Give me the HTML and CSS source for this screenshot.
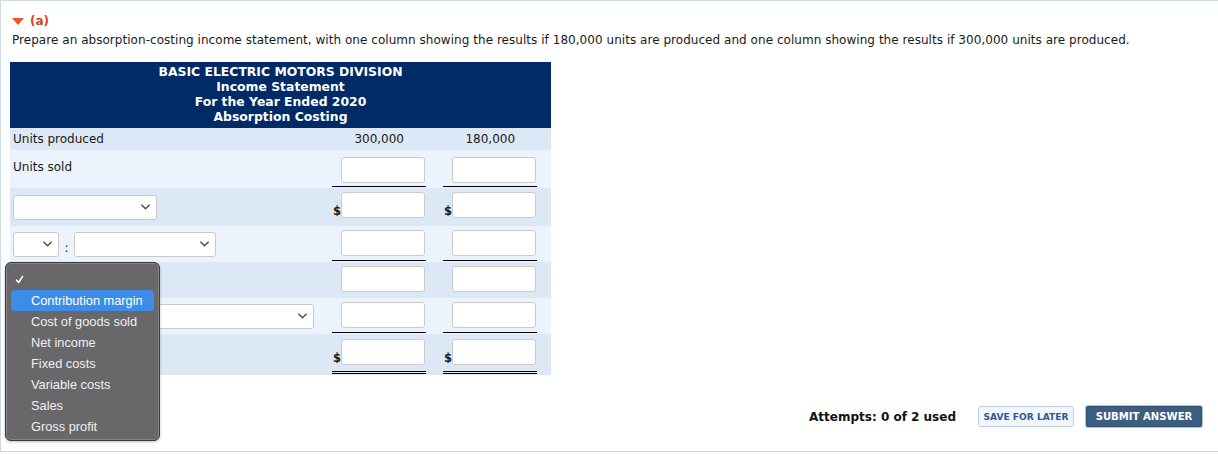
FILE: index.html
```html
<!DOCTYPE html>
<html>
<head>
<meta charset="utf-8">
<link rel="stylesheet" href="styles.css">
</head>
<body>
<div class="frame">
  <div class="part-head"><span class="tri"></span><span class="part-label">(a)</span></div>
  <p class="prompt">Prepare an absorption-costing income statement, with one column showing the results if 180,000 units are produced and one column showing the results if 300,000 units are produced.</p>

  <table class="stmt">
    <colgroup><col class="c-label"><col class="c-val"><col class="c-val2"></colgroup>
    <thead>
      <tr><th colspan="3">BASIC ELECTRIC MOTORS DIVISION<br>Income Statement<br>For the Year Ended 2020<br>Absorption Costing</th></tr>
    </thead>
    <tbody>
      <tr class="r-produced dark">
        <td class="label">Units produced</td>
        <td class="num">300,000</td>
        <td class="num">180,000</td>
      </tr>
      <tr class="r-sold light">
        <td class="label">Units sold</td>
        <td class="val"><div class="box under"><span class="cur"></span><span class="inp"></span></div></td>
        <td class="val"><div class="box under"><span class="cur"></span><span class="inp"></span></div></td>
      </tr>
      <tr class="r38 dark">
        <td class="label"><div class="sel w144"><svg class="chev" viewBox="0 0 10 6"><path d="M1 1l4 4 4-4" /></svg></div></td>
        <td class="val"><div class="box"><span class="cur">$</span><span class="inp"></span></div></td>
        <td class="val"><div class="box"><span class="cur">$</span><span class="inp"></span></div></td>
      </tr>
      <tr class="r36 light">
        <td class="label"><div class="selrow"><div class="sel w46"><svg class="chev" viewBox="0 0 10 6"><path d="M1 1l4 4 4-4" /></svg></div><span class="colon">:</span><div class="sel w142"><svg class="chev" viewBox="0 0 10 6"><path d="M1 1l4 4 4-4" /></svg></div></div></td>
        <td class="val"><div class="box under"><span class="cur"></span><span class="inp"></span></div></td>
        <td class="val"><div class="box under"><span class="cur"></span><span class="inp"></span></div></td>
      </tr>
      <tr class="r36 dark">
        <td class="label"></td>
        <td class="val"><div class="box"><span class="cur"></span><span class="inp"></span></div></td>
        <td class="val"><div class="box"><span class="cur"></span><span class="inp"></span></div></td>
      </tr>
      <tr class="r36 light">
        <td class="label"><div class="sel w301"><svg class="chev" viewBox="0 0 10 6"><path d="M1 1l4 4 4-4" /></svg></div></td>
        <td class="val"><div class="box under"><span class="cur"></span><span class="inp"></span></div></td>
        <td class="val"><div class="box under"><span class="cur"></span><span class="inp"></span></div></td>
      </tr>
      <tr class="r41 dark">
        <td class="label"></td>
        <td class="val"><div class="box double"><span class="cur">$</span><span class="inp"></span></div></td>
        <td class="val"><div class="box double"><span class="cur">$</span><span class="inp"></span></div></td>
      </tr>
    </tbody>
  </table>

  <div class="footer">
    <span class="attempts">Attempts: 0 of 2 used</span>
    <button class="btn-save">SAVE FOR LATER</button>
    <button class="btn-submit">SUBMIT ANSWER</button>
  </div>

  <div class="menu">
    <div class="menu-item check"><svg class="tick" viewBox="0 0 10 10"><path d="M1.5 5.5l2.5 2.8L8.5 1.5" /></svg></div>
    <div class="menu-item active">Contribution margin</div>
    <div class="menu-item">Cost of goods sold</div>
    <div class="menu-item">Net income</div>
    <div class="menu-item">Fixed costs</div>
    <div class="menu-item">Variable costs</div>
    <div class="menu-item">Sales</div>
    <div class="menu-item">Gross profit</div>
  </div>
</div>
</body>
</html>
```

FILE: styles.css
```css
* { box-sizing: border-box; }
html, body { margin: 0; padding: 0; background: #fff; }
body {
  font-family: "DejaVu Sans", Verdana, sans-serif;
  font-size: 12px;
  color: #1a1a1a;
  width: 1218px;
  height: 454px;
  overflow: hidden;
}
.frame {
  position: relative;
  height: 452px;
  border-top: 1px solid #ccd9e6;
  border-left: 1px solid #ccd9e6;
  border-bottom: 1px solid #ccd9e6;
  padding: 12px 0 0 9px;
}
.part-head {
  display: flex;
  align-items: center;
  height: 15px;
  padding-left: 2px;
}
.tri {
  width: 0; height: 0;
  border-left: 6px solid transparent;
  border-right: 6px solid transparent;
  border-top: 7px solid #f0561c;
  margin-right: 6px;
  margin-top: 1px;
}
.part-label { color: #d8401a; font-weight: bold; font-size: 12px; }
.prompt {
  margin: 5px 0 0 2px;
  line-height: 15px;
  font-size: 12px;
  letter-spacing: 0.04px;
}
.stmt {
  margin-top: 14px;
  border-collapse: collapse;
  width: 541px;
  table-layout: fixed;
}
.c-label { width: 320px; }
.c-val { width: 110px; }
.c-val2 { width: 111px; }
.stmt th {
  background: #002b66;
  color: #fff;
  font-weight: bold;
  font-size: 12.4px;
  line-height: 15px;
  height: 66px;
  padding: 2px 0 4px;
  text-align: center;
}
.stmt td { padding: 0; }
.dark { background: #dde8f6; }
.light { background: #ebf3fd; }
.r-produced { height: 22px; }
.r-sold { height: 38px; }
.r38 { height: 38px; }
.r36 { height: 36px; }
.r41 { height: 41px; }
.label { padding-left: 3px !important; vertical-align: middle; }
.r-produced .label { padding-bottom: 1px !important; }
.r-produced .num { padding-bottom: 1px !important; }
.r-sold .label { vertical-align: top; padding-top: 10px !important; }
.num { text-align: right; padding-right: 36px !important; vertical-align: middle; }
.val { vertical-align: bottom; padding-bottom: 1px !important; }
.r-sold .val { padding-bottom: 1px !important; }
.box {
  display: flex;
  align-items: flex-end;
  width: 94px;
  margin-left: 2px;
  padding-bottom: 3px;
  border-bottom: 1px solid transparent;
}
.val + .val .box { margin-left: 3px; }
.box.under { border-bottom-color: #000; }
.box.double { border-bottom: 3px double #000; padding-bottom: 6px; }
.cur {
  width: 9px;
  font-weight: bold;
  font-size: 11.5px;
  line-height: 12px;
  padding-left: 1px;
  margin-bottom: 1px;
}
.inp {
  display: block;
  width: 84px;
  height: 26px;
  background: #fff;
  border: 1px solid #cbcbcb;
  border-radius: 3px;
}
.r38 .box, .r36 .box { padding-bottom: 4px; }
.r38 .val { padding-bottom: 3px !important; }
.sel {
  height: 25px;
  background: #fff;
  border: 1px solid #c9c9c9;
  border-radius: 3px;
  display: flex;
  align-items: center;
  justify-content: flex-end;
  padding-right: 6px;
}
.w144 { width: 144px; }
.w46 { width: 46px; }
.w142 { width: 142px; }
.w301 { width: 301px; }
.chev { width: 9px; height: 6px; }
.chev path { fill: none; stroke: #555; stroke-width: 1.8; stroke-linecap: round; stroke-linejoin: round; }
.selrow { display: flex; align-items: center; }
.colon { width: 15px; text-align: center; padding-top: 8px; font-size: 12px; }
.footer {
  display: flex;
  justify-content: flex-end;
  align-items: center;
  margin-top: 30px;
  padding-right: 15px;
}
.attempts { font-weight: bold; font-size: 12px; color: #111; margin-right: 22px; }
.btn-save {
  font-family: "DejaVu Sans", Verdana, sans-serif;
  font-weight: bold;
  font-size: 9.1px;
  color: #2f5b95;
  background: #f2f6fb;
  border: 1px solid #b9cde3;
  border-radius: 3px;
  height: 21px;
  width: 96px;
  padding: 0;
  margin-right: 11px;
}
.btn-submit {
  font-family: "DejaVu Sans", Verdana, sans-serif;
  font-weight: bold;
  font-size: 10.1px;
  color: #fff;
  background: #3e5e80;
  border: 1px solid #b6c6d8;
  border-radius: 3px;
  height: 23px;
  width: 118px;
  padding: 0;
  box-shadow: inset 0 0 0 1px #2f4f70;
}
.menu {
  position: absolute;
  left: 4px;
  top: 261px;
  width: 155px;
  height: 179px;
  background: #686769;
  border: 1px solid #3b3b3c;
  border-radius: 6px;
  box-shadow: inset 0 0 0 1px #858486, 0 1px 3px rgba(0,0,0,0.25);
  padding: 6px 5px;
  font-family: "Liberation Sans", Arial, sans-serif;
  font-size: 12.8px;
  color: #f0f0f0;
}
.menu-item {
  height: 21px;
  line-height: 21px;
  padding-left: 20px;
  border-radius: 4px;
}
.menu-item.check { height: 21px; padding-left: 4px; display: flex; align-items: center; }
.tick { width: 9px; height: 9px; }
.tick path { fill: none; stroke: #fff; stroke-width: 1.7; stroke-linecap: round; stroke-linejoin: round; }
.menu-item.active { background: #3d8de8; color: #fff; }
```
